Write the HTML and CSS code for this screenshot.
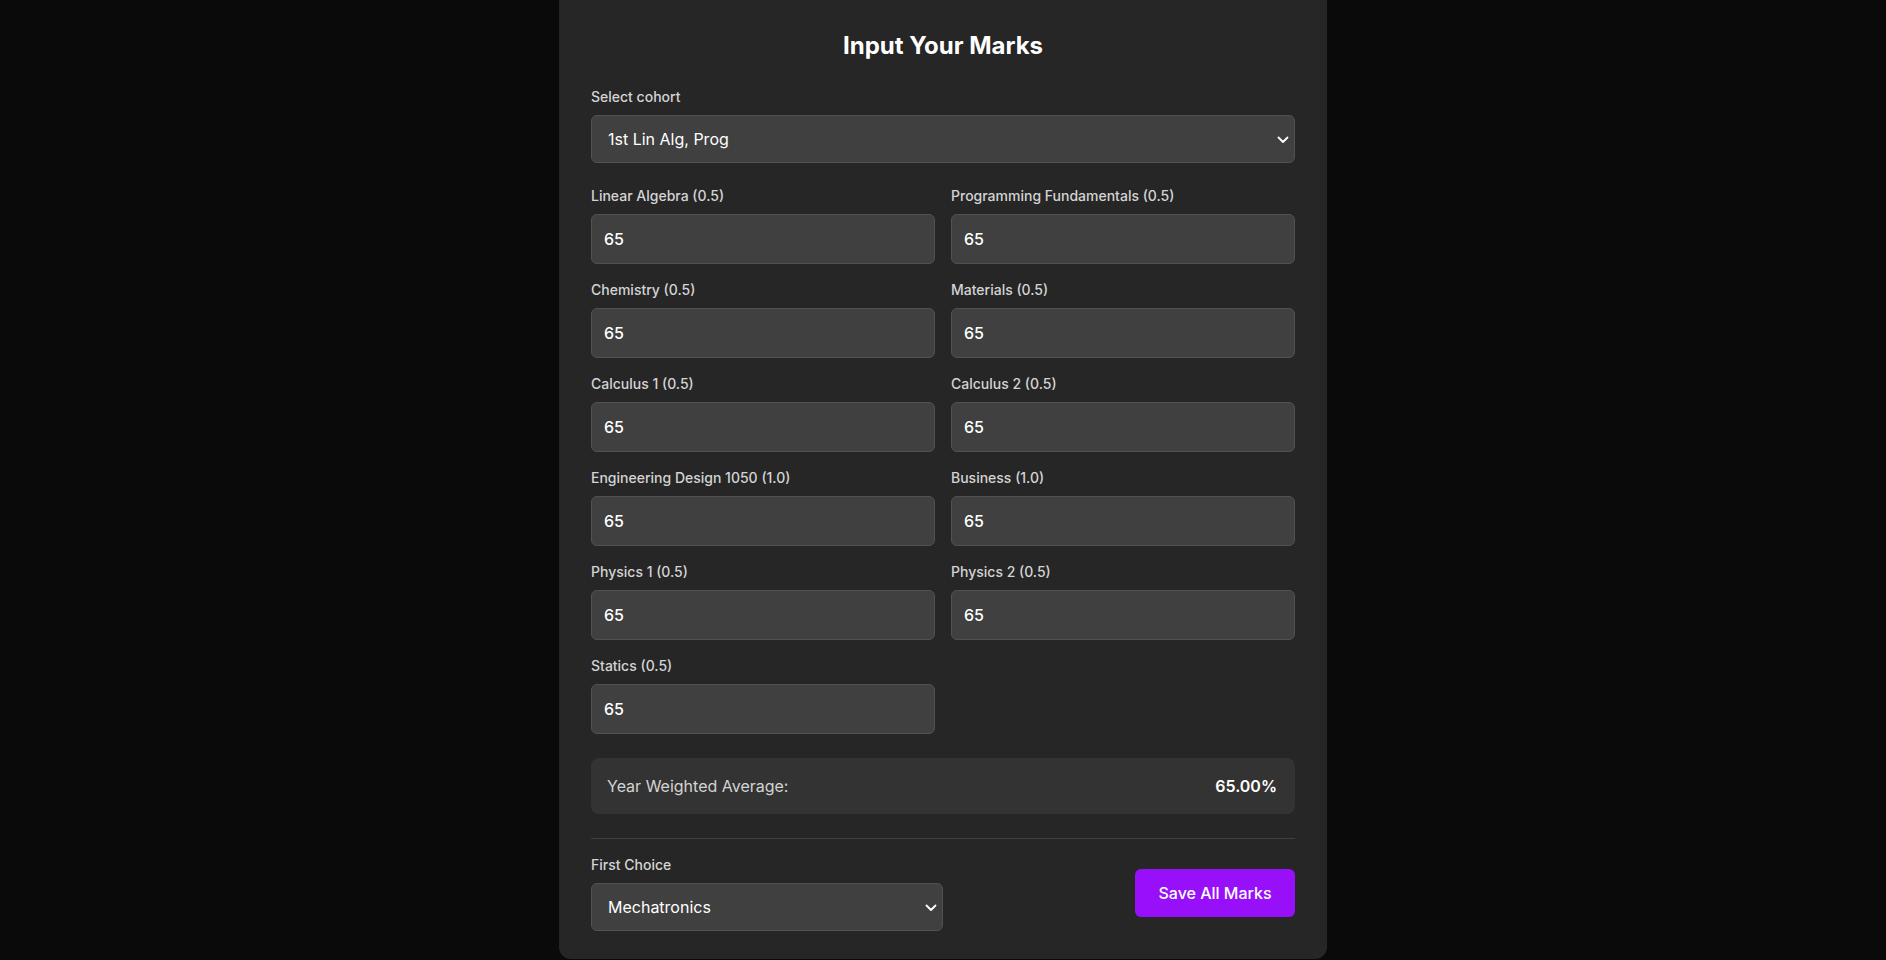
FILE: index.html
```html
<!DOCTYPE html>
<html lang="en">
<head>
<meta charset="utf-8">
<title>Input Your Marks</title>
<link rel="stylesheet" href="styles.css">
</head>
<body>
<main class="page">
  <section class="card">
    <h1 class="title">Input Your Marks</h1>

    <div class="field">
      <label class="label">Select cohort</label>
      <div class="select-wrap">
        <select class="select"><option>1st Lin Alg, Prog</option></select>
        <svg class="chev" viewBox="0 0 12 8" width="12" height="8"><path d="M1.5 1.5 L6 6 L10.5 1.5" fill="none" stroke="#fff" stroke-width="1.8" stroke-linecap="round" stroke-linejoin="round"/></svg>
      </div>
    </div>

    <div class="grid">
      <div class="field"><label class="label">Linear Algebra (0.5)</label><input class="input" value="65"></div>
      <div class="field"><label class="label">Programming Fundamentals (0.5)</label><input class="input" value="65"></div>
      <div class="field"><label class="label">Chemistry (0.5)</label><input class="input" value="65"></div>
      <div class="field"><label class="label">Materials (0.5)</label><input class="input" value="65"></div>
      <div class="field"><label class="label">Calculus 1 (0.5)</label><input class="input" value="65"></div>
      <div class="field"><label class="label">Calculus 2 (0.5)</label><input class="input" value="65"></div>
      <div class="field"><label class="label">Engineering Design 1050 (1.0)</label><input class="input" value="65"></div>
      <div class="field"><label class="label">Business (1.0)</label><input class="input" value="65"></div>
      <div class="field"><label class="label">Physics 1 (0.5)</label><input class="input" value="65"></div>
      <div class="field"><label class="label">Physics 2 (0.5)</label><input class="input" value="65"></div>
      <div class="field"><label class="label">Statics (0.5)</label><input class="input" value="65"></div>
    </div>

    <div class="average">
      <span class="avg-label">Year Weighted Average:</span>
      <span class="avg-value">65.00%</span>
    </div>

    <div class="footer">
      <div class="choice">
        <label class="label">First Choice</label>
        <div class="select-wrap">
          <select class="select"><option>Mechatronics</option></select>
          <svg class="chev" viewBox="0 0 12 8" width="12" height="8"><path d="M1.5 1.5 L6 6 L10.5 1.5" fill="none" stroke="#fff" stroke-width="1.8" stroke-linecap="round" stroke-linejoin="round"/></svg>
        </div>
      </div>
      <button class="save">Save All Marks</button>
    </div>
  </section>
</main>
</body>
</html>
```

FILE: styles.css
```css
* { box-sizing: border-box; }
html, body { margin: 0; padding: 0; }
body {
  background: #0a0a0a;
  font-family: Inter, "Noto Sans", "Liberation Sans", sans-serif;
  color: #fff;
  height: 960px;
  overflow: hidden;
}
.page {
  display: flex;
  justify-content: center;
}
.card {
  width: 768px;
  background: #262626;
  border-radius: 0 0 12px 12px;
  padding: 30px 32px 28px;
}
.title {
  margin: 0 0 25px;
  text-align: center;
  font-size: 24px;
  line-height: 32px;
  font-weight: 700;
  color: #fff;
}
.field {
  display: flex;
  flex-direction: column;
}
.label {
  font-size: 14px;
  line-height: 20px;
  font-weight: 500;
  color: #d4d4d4;
  margin-bottom: 8px;
}
.select-wrap {
  position: relative;
}
.select {
  appearance: none;
  -webkit-appearance: none;
  width: 100%;
  height: 48px;
  background: #404040;
  border: 1px solid #525252;
  border-radius: 6px;
  color: #fff;
  font-family: inherit;
  font-size: 16px;
  padding: 0 16px;
  outline: none;
}
.chev {
  position: absolute;
  right: 6px;
  top: 21px;
  pointer-events: none;
}
.grid {
  display: grid;
  grid-template-columns: 1fr 1fr;
  column-gap: 16px;
  row-gap: 16px;
  margin-top: 23px;
}
.input {
  width: 100%;
  height: 50px;
  background: #404040;
  border: 1px solid #525252;
  border-radius: 6px;
  color: #fff;
  font-family: inherit;
  font-size: 16px;
  font-weight: 500;
  padding: 0 12px;
  outline: none;
}
.average {
  margin-top: 24px;
  display: flex;
  justify-content: space-between;
  align-items: center;
  background: #333333;
  border-radius: 8px;
  padding: 16px;
  line-height: 24px;
}
.avg-label {
  font-size: 16px;
  color: #d4d4d4;
}
.avg-value {
  font-size: 16px;
  font-weight: 600;
  color: #fff;
  padding-right: 2px;
}
.footer {
  margin-top: 24px;
  border-top: 1px solid #404040;
  padding-top: 16px;
  display: flex;
  justify-content: space-between;
  align-items: center;
}
.choice {
  display: flex;
  flex-direction: column;
  width: 352px;
}
.save {
  width: 160px;
  height: 48px;
  background: #9810fa;
  color: #fff;
  border: none;
  border-radius: 6px;
  font-family: inherit;
  font-size: 16px;
  font-weight: 500;
}
```
